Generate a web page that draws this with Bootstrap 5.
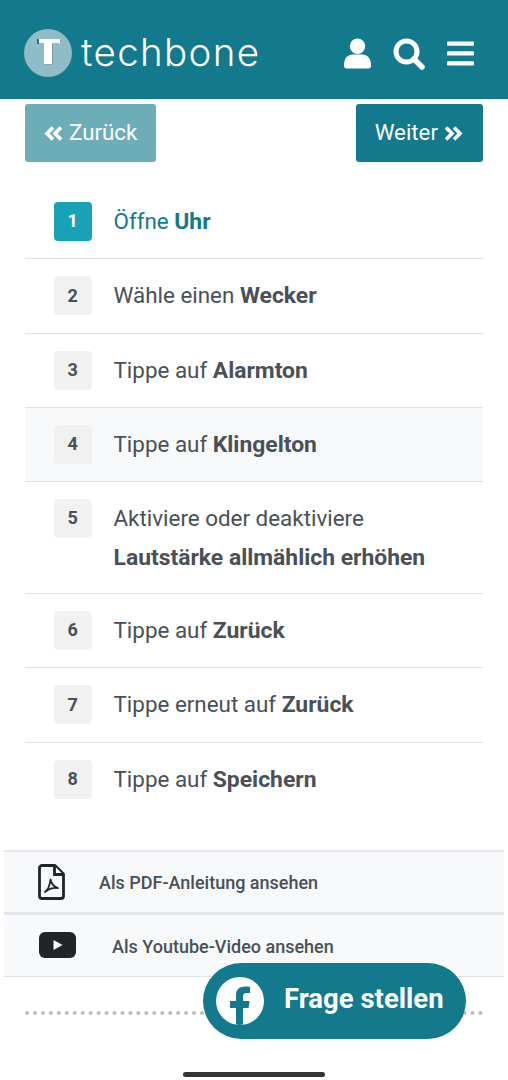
<!DOCTYPE html>
<html lang="de">
<head>
<meta charset="utf-8">
<title>techbone</title>
<link rel="stylesheet" href="https://cdn.jsdelivr.net/npm/bootstrap@5.3.0/dist/css/bootstrap.min.css">
<style>
html,body{height:1080px;overflow:hidden}
body{font-family:Roboto,"Liberation Sans",sans-serif;color:#495057;background:#fff;position:relative}
.tb-head{height:99px;background:#127a8c;padding:6px 34px 0 24px}
.tb-logo{width:48px;height:48px;border-radius:50%;background:#8fbcc6;flex:none}
.tb-brand{font-family:Inter,Lato,sans-serif;font-weight:300;font-size:38.500px;color:#fff;margin-left:9px;line-height:1;letter-spacing:1.350px}
.tb-icons{gap:22px;padding-top:2px}
.tb-pager{padding:5px 25px 0}
.tb-btn{height:58px;font-size:22.3px;border-radius:3px;background:#127a8c;color:#fff;border:0;padding:0 19px;gap:6px}
.tb-btn:hover{background:#127a8c;color:#fff}
.tb-btn.tb-next{padding-right:20px}
.tb-btn.tb-off{background:#6dadb7;color:#fff;opacity:1}
.tb-steps{margin:23px 25px 0;list-style:none;padding:0}
.tb-step{display:flex;min-height:74.3px;padding:17px 0 17px 28.500px;border-bottom:1.5px solid #dee2e6;font-size:22.4px;line-height:38.5px}
.tb-step:last-child{border-bottom:0}
.tb-step.tb-shade{background:#f8f9fa}
.tb-num{flex:none;width:38.500px;height:39px;border-radius:4px;background:#f1f1f1;font-size:18px;font-weight:700;display:flex;align-items:center;justify-content:center;margin-right:21.500px}
.tb-step b{font-weight:700;font-size:22.900px;line-height:1}
.tb-cur{color:#127a8c}
.tb-cur .tb-num{background:#17a2b8;color:#fff}
.tb-links{margin:33px 4px 0}
.tb-link{height:62px;background:#f8f9fa;font-size:18px;font-weight:500;color:#495057;border-top:2px solid #e4e6ea}
.tb-link+.tb-link{border-top-width:3px;border-bottom:1.5px solid #dee2e6;height:65px}
.tb-link+.tb-link span{padding-top:2px}
.tb-dots{margin:34px 25px 0;border-top:4px dotted #bdbdbd}
.tb-fab{position:absolute;left:203px;top:963px;width:263px;height:76px;border-radius:38px;background:#127a8c;color:#fff;font-size:27.500px;font-weight:700;padding:0 0 4px 13px}
.tb-fab svg{flex:none;margin:4px 20px 0 0}
.tb-home{position:absolute;left:183px;top:1072px;width:142px;height:5px;border-radius:3px;background:#333}
</style>
</head>
<body>
<header class="tb-head d-flex align-items-center justify-content-between">
  <div class="d-flex align-items-center">
    <svg class="tb-logo" viewBox="0 0 48 48"><path d="M13 10h22v5H13z" fill="#127a8c"/><path d="M15 10h21v4.500h-7V35h-9V14.500h-5z" fill="#fff"/><path d="M29 14.500V35.500h-8V35h7V14.500z" fill="#7f959b"/></svg>
    <span class="tb-brand">techbone</span>
  </div>
  <div class="tb-icons d-flex align-items-center">
    <svg width="27" height="31" viewBox="0 0 28 32" fill="#fff"><circle cx="14" cy="8.500" r="8"/><path d="M0 28c0-7 4-11 9-11h10c5 0 9 4 9 11v1c0 1.500-1 2.500-2.500 2.500h-23C1 31.500 0 30.500 0 29z"/></svg>
    <svg width="32" height="32" viewBox="0 0 32 32" fill="none" stroke="#fff" stroke-linecap="round"><circle cx="13.500" cy="13.500" r="10.500" stroke-width="5"/><path d="M21 21l8 8" stroke-width="5.500"/></svg>
    <svg width="27" height="25" viewBox="0 0 28 25" fill="#fff"><rect width="28" height="4.500" rx="1"/><rect y="10.200" width="28" height="4.500" rx="1"/><rect y="20.500" width="28" height="4.500" rx="1"/></svg>
  </div>
</header>

<div class="tb-pager d-flex justify-content-between">
  <a class="btn tb-btn tb-off d-flex align-items-center" href="#">
    <svg width="19" height="15" viewBox="0 0 19 15" fill="none" stroke="#fff" stroke-width="3.600"><path d="M9 1.500 3 7.500l6 6M17 1.500l-6 6 6 6"/></svg>Zurück</a>
  <a class="btn tb-btn tb-next d-flex align-items-center" href="#">Weiter
    <svg width="19" height="15" viewBox="0 0 19 15" fill="none" stroke="#fff" stroke-width="3.600"><path d="M2 1.500l6 6-6 6M10 1.500l6 6-6 6"/></svg></a>
</div>

<ol class="tb-steps">
  <li class="tb-step tb-cur"><span class="tb-num">1</span><span>Öffne <b>Uhr</b></span></li>
  <li class="tb-step"><span class="tb-num">2</span><span>Wähle einen <b>Wecker</b></span></li>
  <li class="tb-step"><span class="tb-num">3</span><span>Tippe auf <b>Alarmton</b></span></li>
  <li class="tb-step tb-shade"><span class="tb-num">4</span><span>Tippe auf <b>Klingelton</b></span></li>
  <li class="tb-step"><span class="tb-num">5</span><span>Aktiviere oder deaktiviere<br><b>Lautstärke allmählich erhöhen</b></span></li>
  <li class="tb-step"><span class="tb-num">6</span><span>Tippe auf <b>Zurück</b></span></li>
  <li class="tb-step"><span class="tb-num">7</span><span>Tippe erneut auf <b>Zurück</b></span></li>
  <li class="tb-step"><span class="tb-num">8</span><span>Tippe auf <b>Speichern</b></span></li>
</ol>

<div class="tb-links">
  <div class="tb-link d-flex align-items-center">
    <svg style="margin-left:34px;margin-right:34px" width="27" height="36" viewBox="0 0 27 36" fill="none" stroke="#212529" stroke-width="2.800"><path d="M17 1.500H4A2.500 2.500 0 0 0 1.500 4v28A2.500 2.500 0 0 0 4 34.500h19a2.500 2.500 0 0 0 2.500-2.500V10z" stroke-linejoin="round"/><path d="M16.500 2v8.500H25" fill="#fff"/><path d="M7 28c2.500-2 5-7.500 5.500-12.500 1 4 3.500 7.500 7.500 8.500-5-.5-9.500 1-13 4z" stroke-width="1.800" stroke-linejoin="round"/></svg>
    <span>Als PDF-Anleitung ansehen</span>
  </div>
  <div class="tb-link d-flex align-items-center">
    <svg style="margin-left:35px;margin-right:35px" width="38" height="27" viewBox="0 0 38 27"><rect width="37" height="26" rx="6" fill="#212529"/><path d="M14.500 8v10l9-5z" fill="#fff"/></svg>
    <span>Als Youtube-Video ansehen</span>
  </div>
</div>

<div class="tb-dots"></div>

<a class="tb-fab d-flex align-items-center text-decoration-none" href="#">
  <svg width="48" height="48" viewBox="0 0 48 48"><circle cx="24" cy="24" r="24" fill="#fff"/><path d="M20 47.600V31h-6v-7h6v-5.500C20 12.500 23.500 9.500 29 9.500c2.500 0 4.500.3 5 .4v6h-3.300c-2.700 0-3.700 1.500-3.700 3.600V24h6.600l-1 7H27v16.600c-2.300.5-4.700.5-7 0z" fill="#127a8c"/></svg>
  <span>Frage stellen</span>
</a>
<div class="tb-home"></div>
<script src="https://cdn.jsdelivr.net/npm/bootstrap@5.3.0/dist/js/bootstrap.bundle.min.js"></script>
</body>
</html>
